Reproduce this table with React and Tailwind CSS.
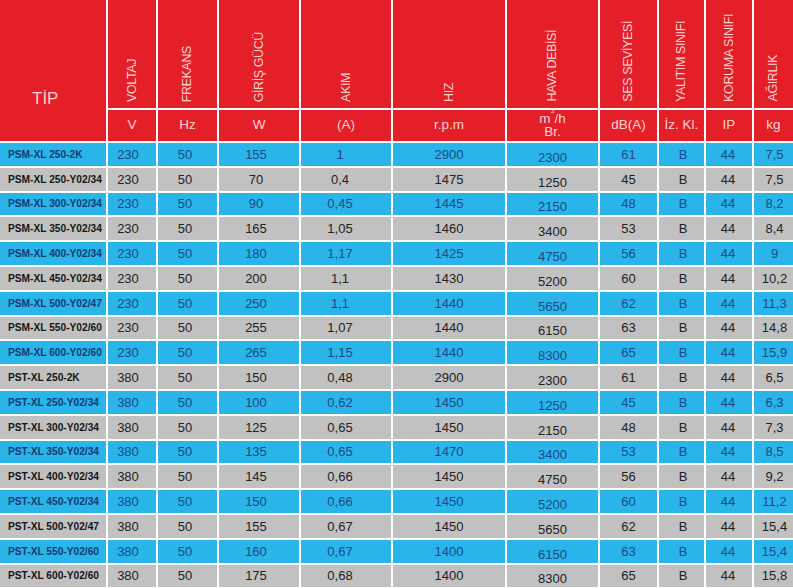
import React from 'react';

const rows = [
  ['PSM-XL 250-2K', '230', '50', '155', '1', '2900', '2300', '61', 'B', '44', '7,5'],
  ['PSM-XL 250-Y02/34', '230', '50', '70', '0,4', '1475', '1250', '45', 'B', '44', '7,5'],
  ['PSM-XL 300-Y02/34', '230', '50', '90', '0,45', '1445', '2150', '48', 'B', '44', '8,2'],
  ['PSM-XL 350-Y02/34', '230', '50', '165', '1,05', '1460', '3400', '53', 'B', '44', '8,4'],
  ['PSM-XL 400-Y02/34', '230', '50', '180', '1,17', '1425', '4750', '56', 'B', '44', '9'],
  ['PSM-XL 450-Y02/34', '230', '50', '200', '1,1', '1430', '5200', '60', 'B', '44', '10,2'],
  ['PSM-XL 500-Y02/47', '230', '50', '250', '1,1', '1440', '5650', '62', 'B', '44', '11,3'],
  ['PSM-XL 550-Y02/60', '230', '50', '255', '1,07', '1440', '6150', '63', 'B', '44', '14,8'],
  ['PSM-XL 600-Y02/60', '230', '50', '265', '1,15', '1440', '8300', '65', 'B', '44', '15,9'],
  ['PST-XL 250-2K', '380', '50', '150', '0,48', '2900', '2300', '61', 'B', '44', '6,5'],
  ['PST-XL 250-Y02/34', '380', '50', '100', '0,62', '1450', '1250', '45', 'B', '44', '6,3'],
  ['PST-XL 300-Y02/34', '380', '50', '125', '0,65', '1450', '2150', '48', 'B', '44', '7,3'],
  ['PST-XL 350-Y02/34', '380', '50', '135', '0,65', '1470', '3400', '53', 'B', '44', '8,5'],
  ['PST-XL 400-Y02/34', '380', '50', '145', '0,66', '1450', '4750', '56', 'B', '44', '9,2'],
  ['PST-XL 450-Y02/34', '380', '50', '150', '0,66', '1450', '5200', '60', 'B', '44', '11,2'],
  ['PST-XL 500-Y02/47', '380', '50', '155', '0,67', '1450', '5650', '62', 'B', '44', '15,4'],
  ['PST-XL 550-Y02/60', '380', '50', '160', '0,67', '1400', '6150', '63', 'B', '44', '15,4'],
  ['PST-XL 600-Y02/60', '380', '50', '175', '0,68', '1400', '8300', '65', 'B', '44', '15,8'],
];

const headers = ['VOLTAJ', 'FREKANS', 'GİRİŞ GÜCÜ', 'AKIM', 'HIZ', 'HAVA DEBİSİ', 'SES SEVİYESİ', 'YALITIM SINIFI', 'KORUMA SINIFI', 'AĞIRLIK'];
const units = ['V', 'Hz', 'W', '(A)', 'r.p.m', null, 'dB(A)', 'İz. Kl.', 'IP', 'kg'];

// small per-column nudges, the scan isn't perfectly centred
const nudge = ['pr-[8px]', 'pr-[5px]', 'pr-[6px]', 'pr-[12px]', '', 'pt-[6px]', '', 'pl-[3px]', 'pr-[2px]', 'pl-[2px]'];

export default function App() {
  return (
    <div className="w-[793px] h-[588px] overflow-hidden bg-white font-['Liberation_Sans',Arial,sans-serif]">
      <div className="grid grid-cols-[106px_48px_59px_80px_90px_112px_91px_57px_45px_46px_39px] grid-rows-[108px_31px] auto-rows-[22.8px] gap-[2px]">
        <div className="row-span-2 bg-[#e41f27] text-[#fbd3d5] text-[17px] flex items-end pb-[30px] pl-[32px]">
          TİP
        </div>
        {headers.map((h) => (
          <div key={h} className="bg-[#e41f27] flex items-end justify-center pb-[6px]">
            <span className="[writing-mode:vertical-rl] rotate-180 text-[12.5px] tracking-[-0.4px] leading-none text-[#fbd3d5] whitespace-nowrap">
              {h}
            </span>
          </div>
        ))}
        {units.map((u, i) => (
          <div key={i} className="bg-[#e41f27] flex items-center justify-center pb-[2px] text-[13.5px] text-[#fbd3d5] leading-none">
            {u === null ? (
              <div className="flex flex-col items-center leading-[13px]">
                <span>
                  m<sup className="text-[7px] align-top relative top-[-1px]">3</sup>/h
                </span>
                <span>Br.</span>
              </div>
            ) : (
              u
            )}
          </div>
        ))}
        {rows.map((r, ri) => {
          const blue = ri % 2 === 0;
          const bg = blue ? 'bg-[#29b5e9]' : 'bg-[#c1c1c1]';
          return (
            <React.Fragment key={ri}>
              <div className={`${bg} flex items-center pl-[8px] text-[10.2px] font-bold whitespace-nowrap ${blue ? 'text-[#123a72]' : 'text-[#151515]'}`}>
                {r[0]}
              </div>
              {r.slice(1).map((v, ci) => (
                <div
                  key={ci}
                  className={`${bg} flex items-center justify-center text-[13px] leading-none ${nudge[ci]} ${blue ? 'text-[#1a4a86]' : 'text-[#222222]'}`}
                >
                  {v}
                </div>
              ))}
            </React.Fragment>
          );
        })}
      </div>
    </div>
  );
}
